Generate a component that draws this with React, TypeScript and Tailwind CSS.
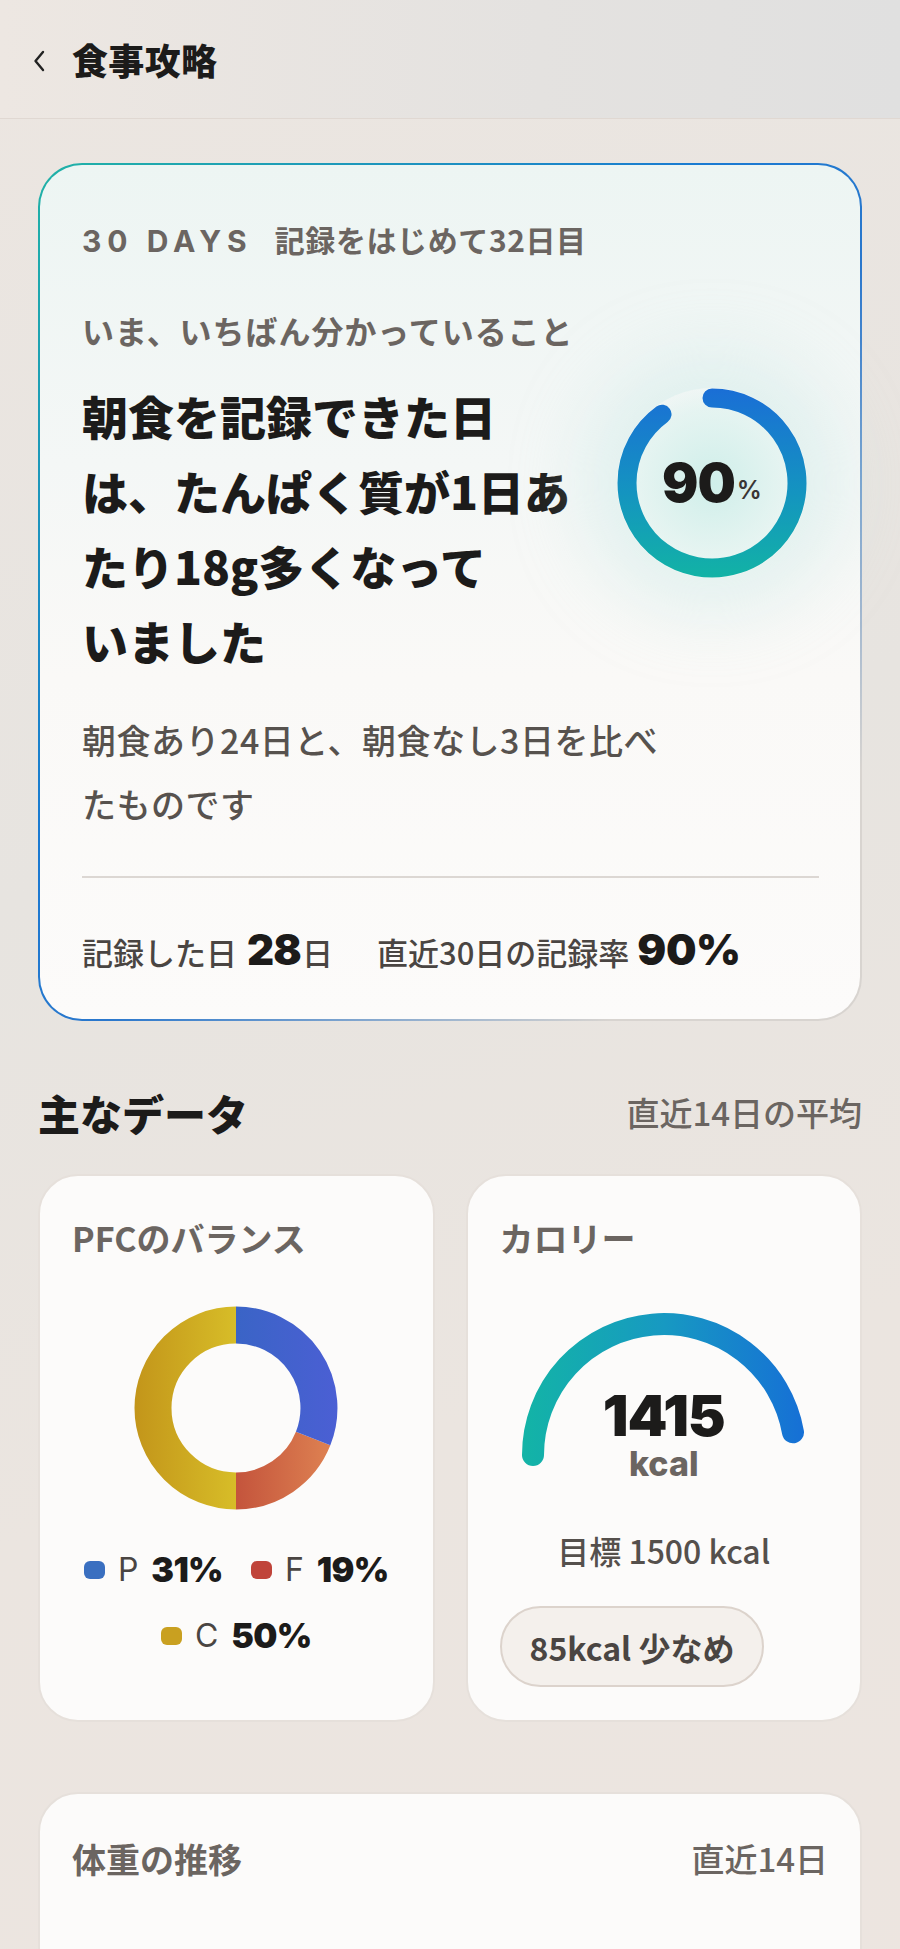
const JP = "font-['Noto_Sans_CJK_JP',sans-serif]";
const NUM = "font-['Inter','Noto_Sans_CJK_JP',sans-serif]";

function Chevron() {
  return (
    <svg width="14" height="24" viewBox="0 0 14 24" fill="none">
      <path d="M11 3 L3.5 12 L11 21" stroke="#222" strokeWidth="2.4" strokeLinecap="round" strokeLinejoin="round" />
    </svg>
  );
}

// 90% ring on the insight card
function ProgressRing() {
  return (
    <div className="relative w-[190px] h-[190px] shrink-0 rounded-full bg-[radial-gradient(circle,rgba(205,238,233,0.95)_0%,rgba(220,242,238,0.6)_55%,rgba(235,246,244,0)_75%)] shadow-[0_0_70px_35px_rgba(190,230,225,0.35)]">
      <svg width="190" height="190" viewBox="0 0 190 190" className="absolute inset-0">
        <defs>
          <linearGradient id="ringGrad" x1="0" y1="0" x2="0" y2="190" gradientUnits="userSpaceOnUse">
            <stop offset="0" stopColor="#1a6ed6" />
            <stop offset="0.55" stopColor="#1494c0" />
            <stop offset="1" stopColor="#12b3a5" />
          </linearGradient>
        </defs>
        <path d="M 95 10 A 85 85 0 1 1 45.04 26.24" stroke="url(#ringGrad)" strokeWidth="19" strokeLinecap="round" fill="none" />
      </svg>
      <div className="absolute inset-0 flex items-center justify-center">
        <span className={`${NUM} text-[54px] font-black tracking-[-0.02em] text-[#1c1b1a] leading-none`}>90</span>
        <span className={`${NUM} text-[25px] font-semibold text-[#3a3634] leading-none mt-[14px] ml-[2px]`}>%</span>
      </div>
    </div>
  );
}

function PfcDonut() {
  return (
    <svg width="204" height="204" viewBox="0 0 204 204">
      <defs>
        <linearGradient id="pBlue" x1="102" y1="0" x2="204" y2="0" gradientUnits="userSpaceOnUse">
          <stop offset="0" stopColor="#3a64c6" />
          <stop offset="1" stopColor="#4b5fd4" />
        </linearGradient>
        <linearGradient id="fOrange" x1="102" y1="0" x2="190" y2="0" gradientUnits="userSpaceOnUse">
          <stop offset="0" stopColor="#c4543c" />
          <stop offset="1" stopColor="#dc7e50" />
        </linearGradient>
        <linearGradient id="cGold" x1="0" y1="0" x2="102" y2="0" gradientUnits="userSpaceOnUse">
          <stop offset="0" stopColor="#c3951a" />
          <stop offset="1" stopColor="#d7bd28" />
        </linearGradient>
      </defs>
      <path d="M 102 185 A 83 83 0 1 1 102 19" stroke="url(#cGold)" strokeWidth="37" fill="none" />
      <path d="M 179.13 132.55 A 83 83 0 0 1 102 185" stroke="url(#fOrange)" strokeWidth="37" fill="none" />
      <path d="M 102 19 A 83 83 0 0 1 179.13 132.55" stroke="url(#pBlue)" strokeWidth="37" fill="none" />
    </svg>
  );
}

function Legend({ color, label, value }: { color: string; label: string; value: string }) {
  return (
    <div className="flex items-center">
      <span className="w-[21px] h-[18px] rounded-[6px]" style={{ backgroundColor: color }} />
      <span className={`${NUM} ml-[13px] text-[32px] font-normal text-[#4a4542] leading-[44px]`}>{label}</span>
      <span className={`${NUM} ml-[13px] text-[34px] font-black text-[#1c1b1a] leading-[44px] tracking-[-0.02em]`}>{value}</span>
    </div>
  );
}

function CalorieGauge() {
  return (
    <div className="relative w-[300px] h-[170px] mx-auto">
      <svg width="300" height="170" viewBox="0 0 300 170">
        <defs>
          <linearGradient id="kcalGrad" x1="8" y1="0" x2="292" y2="0" gradientUnits="userSpaceOnUse">
            <stop offset="0" stopColor="#13b4a6" />
            <stop offset="0.5" stopColor="#1799c2" />
            <stop offset="1" stopColor="#166fd6" />
          </linearGradient>
        </defs>
        <path d="M 19 152 A 131 131 0 0 1 279 129.3" stroke="url(#kcalGrad)" strokeWidth="22" strokeLinecap="round" fill="none" />
      </svg>
      <div className="absolute left-0 right-0 top-[84px] flex flex-col items-center">
        <span className={`${NUM} text-[57px] font-black leading-[58px] tracking-[-0.02em] text-[#1c1b1a]`}>1415</span>
        <span className={`${NUM} text-[34px] font-extrabold leading-[38px] text-[#6b6561]`}>kcal</span>
      </div>
    </div>
  );
}

export default function App() {
  return (
    <div className={`${JP} min-h-screen w-full bg-[linear-gradient(165deg,#ece6e1_0%,#e7e4e0_35%,#ebe5e0_60%,#ede5e0_100%)] text-[#1c1b1a]`}>
      <header className="h-[119px] flex items-center border-b border-[#e0d8d2] bg-[linear-gradient(90deg,#ede7e2_0%,#e4e2e0_60%,#e0e0e0_100%)]">
        <span className="ml-[32px] mt-[4px]">
          <Chevron />
        </span>
        <h1 className="ml-[26px] text-[36px] font-black leading-none tracking-[0.01em]">食事攻略</h1>
      </header>

      <main className="px-[38px] pt-[44px] pb-[60px]">
        {/* insight card */}
        <section className="rounded-[44px] p-[2px] bg-[linear-gradient(135deg,#20b2a6_0%,#1a7ad2_40%,#2a77cc_55%,#d8d4d0_85%)]">
          <div className="rounded-[42px] bg-[linear-gradient(180deg,#edf5f3_0%,#f4f7f6_35%,#faf9f7_60%,#fcfbfa_100%)] pl-[42px] pr-[41px] pt-[54px] pb-[45px]">
            <p className="text-[30px] font-bold leading-[40px] text-[#6b6561]">
              <span className={`${NUM} tracking-[0.2em]`}>30 DAYS</span>
              <span className="ml-[22px] tracking-[0.02em]">記録をはじめて32日目</span>
            </p>
            <p className="mt-[49px] text-[32px] font-bold leading-[40px] text-[#6b6561] tracking-[0.03em]">
              いま、いちばん分かっていること
            </p>
            <div className="mt-[28px] flex items-start">
              <h2 className="w-[510px] text-[46px] font-black leading-[75px]">
                朝食を記録できた日
                <br />
                は、たんぱく質が1日あ
                <br />
                たり18g多くなって
                <br />
                いました
              </h2>
              <div className="ml-[25px] mt-[10px]">
                <ProgressRing />
              </div>
            </div>
            <p className="mt-[30px] text-[34px] font-medium leading-[64px] text-[#57524e] tracking-[0.015em]">
              朝食あり24日と、朝食なし3日を比べ
              <br />
              たものです
            </p>
            <div className="mt-[40px] h-[2px] bg-[#dcd7d3]" />
            <p className="mt-[49px] flex items-baseline text-[31px] font-medium leading-[44px] text-[#4a4542]">
              <span>記録した日</span>
              <span className={`${NUM} ml-[10px] text-[42px] font-black text-[#1c1b1a] tracking-[-0.02em]`}>28</span>
              <span className="ml-[1px]">日</span>
              <span className="ml-[44px]">直近30日の記録率</span>
              <span className={`${NUM} ml-[8px] text-[43px] font-black text-[#1c1b1a] tracking-[-0.01em]`}>90%</span>
            </p>
          </div>
        </section>

        {/* main data */}
        <div className="mt-[67px] flex items-center justify-between">
          <h2 className="text-[42px] font-black leading-[50px]">主なデータ</h2>
          <span className="text-[33px] font-medium text-[#6b6561]">直近14日の平均</span>
        </div>

        <div className="mt-[36px] grid grid-cols-2 gap-[31px]">
          <div className="rounded-[40px] border-2 border-[#e6e0db] bg-[#fcfbfa] px-[32px] pt-[41px] pb-[62px] flex flex-col">
            <h3 className="text-[34px] font-bold leading-[42px] text-[#6b6561]">PFCのバランス</h3>
            <div className="mt-[47px] flex justify-center">
              <PfcDonut />
            </div>
            <div className="mt-[38px] flex flex-wrap justify-center gap-x-[28px] gap-y-[22px]">
              <Legend color="#3a6fc0" label="P" value="31%" />
              <Legend color="#c0443a" label="F" value="19%" />
              <Legend color="#c9a020" label="C" value="50%" />
            </div>
          </div>

          <div className="rounded-[40px] border-2 border-[#e6e0db] bg-[#fcfbfa] px-[32px] pt-[41px] pb-[30px] flex flex-col">
            <h3 className="text-[34px] font-bold leading-[42px] text-[#6b6561]">カロリー</h3>
            <div className="mt-[44px]">
              <CalorieGauge />
            </div>
            <p className="mt-[57px] text-center text-[32px] font-medium leading-[40px] text-[#55504c]">目標 1500 kcal</p>
            <div className="mt-[36px]">
              <span className="inline-flex h-[81px] items-center rounded-full border-2 border-[#dcd3cc] bg-[#f4f0ec] px-[28px] text-[32px] font-bold text-[#4a4542]">
                85kcal 少なめ
              </span>
            </div>
          </div>
        </div>

        {/* weight */}
        <div className="mt-[70px] rounded-[40px] border-2 border-[#e6e0db] bg-[#fcfbfa] px-[32px] pt-[40px] pb-[40px]">
          <div className="flex items-center justify-between">
            <h3 className="text-[34px] font-bold leading-[42px] text-[#6b6561]">体重の推移</h3>
            <span className="text-[33px] font-medium text-[#6b6561]">直近14日</span>
          </div>
          <p className={`${NUM} mt-[58px] text-[26px] font-semibold text-[#8a837e]`}>58.4 kg</p>
          <div className="mt-[20px] h-[240px]" />
        </div>
      </main>
    </div>
  );
}
